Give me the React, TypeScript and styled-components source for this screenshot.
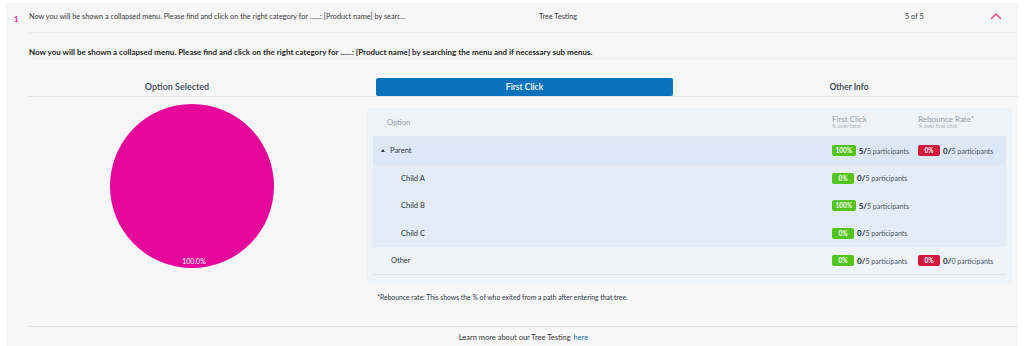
import styled, { createGlobalStyle } from 'styled-components'

const GlobalStyle = createGlobalStyle`
  body {
    margin: 0;
    background: #ffffff;
    font-family: Lato, 'Open Sans', sans-serif;
    color: #333a44;
  }
`;

interface TreeRow {
  label: string;
  level: 'parent' | 'child' | 'other';
  firstPct: string;
  firstCount: number;
  firstTotal: number;
  rebounce?: { pct: string; count: number; total: number };
}

const rows: TreeRow[] = [
  { label: 'Parent', level: 'parent', firstPct: '100%', firstCount: 5, firstTotal: 5, rebounce: { pct: '0%', count: 0, total: 5 } },
  { label: 'Child A', level: 'child', firstPct: '0%', firstCount: 0, firstTotal: 5 },
  { label: 'Child B', level: 'child', firstPct: '100%', firstCount: 5, firstTotal: 5 },
  { label: 'Child C', level: 'child', firstPct: '0%', firstCount: 0, firstTotal: 5 },
  { label: 'Other', level: 'other', firstPct: '0%', firstCount: 0, firstTotal: 5, rebounce: { pct: '0%', count: 0, total: 0 } },
];

const Card = styled.div`
  display: flex;
  margin: 3px 6px 0 6px;
  background: #f7f7f7;
  height: 343px;
`;

const Index = styled.div`
  width: 15px;
  padding: 12px 0 0 8px;
  font-size: 7.5px;
  font-weight: 700;
  color: #e6218a;
`;

const Content = styled.div`
  flex: 1;
  display: flex;
  flex-direction: column;
`;

const Header = styled.div`
  display: grid;
  grid-template-columns: 510px 366px 1fr 28px;
  align-items: center;
  height: 26px;
  padding-bottom: 3px;
  border-bottom: 1px solid #ececec;
  font-size: 7.3px;
  color: #3a3a3a;
`;

const Chevron = styled.svg`
  width: 12px;
  height: 8px;
`;

const Question = styled.div`
  padding: 14px 0 1px;
  font-size: 8px;
  font-weight: 700;
  color: #1f1f1f;
  border-bottom: 1px solid #f1f1f1;
`;

const TabRow = styled.div`
  display: grid;
  grid-template-columns: 338px 1fr;
  margin-top: 19px;
  border-bottom: 1px solid #e4e4e4;
`;

const SideTitle = styled.div`
  text-align: center;
  font-size: 9px;
  font-weight: 600;
  color: #3d4a5c;
  line-height: 18px;
  padding-right: 42px;
`;

const Tabs = styled.div`
  display: grid;
  grid-template-columns: 297px 1fr;
  gap: 15px;
  padding: 0 8px 0 9px;
`;

const Tab = styled.div<{ $active?: boolean }>`
  height: 18px;
  line-height: 18px;
  text-align: center;
  border-radius: 2px;
  font-size: 8.5px;
  font-weight: 600;
  color: ${p => (p.$active ? '#ffffff' : '#2f3a48')};
  background: ${p => (p.$active ? '#0a72ba' : 'transparent')};
`;

const Body = styled.div`
  display: grid;
  grid-template-columns: 338px 1fr;
`;

const PieSide = styled.div`
  padding: 6px 0 0 80px;
`;

const Panel = styled.div`
  margin: 11px 6px 0 0;
  padding: 0 6px 8px;
  background: #eef3f8;
`;

const Row = styled.div<{ $bg?: string; $line?: boolean; $h: number }>`
  display: grid;
  grid-template-columns: 1fr 86px 88px;
  align-items: center;
  height: ${p => p.$h}px;
  background: ${p => p.$bg || 'transparent'};
  border-bottom: ${p => (p.$line ? '1px solid #dde4ec' : 'none')};
`;

const HeadLabel = styled.div`
  padding-left: 14px;
  font-size: 7.5px;
  color: #8f98a3;
`;

const HeadCol = styled.div`
  font-size: 8px;
  color: #959ea8;
  line-height: 8px;
  small {
    display: block;
    font-size: 5.5px;
    line-height: 7px;
    color: #aab2bb;
  }
`;

const Label = styled.div<{ $indent: number }>`
  display: flex;
  align-items: center;
  gap: 5px;
  padding-left: ${p => p.$indent}px;
  font-size: 7.5px;
  color: #2c3440;
`;

const Caret = styled.span`
  width: 0;
  height: 0;
  border-left: 2.5px solid transparent;
  border-right: 2.5px solid transparent;
  border-bottom: 3px solid #2c3440;
`;

const Stat = styled.div`
  display: flex;
  align-items: center;
  gap: 3px;
  font-size: 7px;
  color: #4a5563;
  b {
    font-size: 8px;
    font-weight: 700;
    color: #252b33;
  }
`;

const Badge = styled.span<{ $kind: 'good' | 'bad' }>`
  display: inline-block;
  height: 11px;
  line-height: 11px;
  padding: 0 3.5px;
  min-width: 15px;
  text-align: center;
  border-radius: 2px;
  font-size: 6.5px;
  font-weight: 700;
  color: #ffffff;
  background: ${p => (p.$kind === 'good' ? '#52c41a' : '#d4173f')};
`;

const Note = styled.div`
  padding: 10px 0 0 10px;
  font-size: 6.8px;
  color: #2f3a4a;
`;

const Footer = styled.div`
  margin-top: auto;
  border-top: 1px solid #e2e2e2;
  height: 19px;
  line-height: 21px;
  text-align: center;
  font-size: 7.5px;
  color: #3a3a3a;
  a {
    color: #1a73c7;
    text-decoration: none;
    margin-left: 3px;
  }
`;

function Pie() {
  return (
    <svg width="166" height="166" viewBox="0 0 166 166">
      <circle cx="83" cy="83" r="82" fill="#e6089a" />
      <text x="85" y="164" fill="#ffffff" fontSize="7" fontFamily="Lato, sans-serif" textAnchor="middle" dy="-3">100.0%</text>
    </svg>
  );
}

function StatCell({ pct, count, total, kind }: { pct: string; count: number; total: number; kind: 'good' | 'bad' }) {
  return (
    <Stat>
      <Badge $kind={kind}>{pct}</Badge>
      <span><b>{count}/</b>{total} participants</span>
    </Stat>
  );
}

export default function App() {
  const bgFor = (level: TreeRow['level']) =>
    level === 'parent' ? '#dce8f6' : level === 'child' ? '#e3ecf7' : 'transparent';
  const indentFor = (level: TreeRow['level']) =>
    level === 'parent' ? 8 : level === 'child' ? 28 : 18;

  return (
    <>
      <GlobalStyle />
      <Card>
        <Index>1</Index>
        <Content>
          <Header>
            <span>Now you will be shown a collapsed menu. Please find and click on the right category for ......: [Product name] by searc...</span>
            <span>Tree Testing</span>
            <span>5 of 5</span>
            <Chevron viewBox="0 0 12 8">
              <path d="M1 7 L6 2 L11 7" fill="none" stroke="#e0457b" strokeWidth="1.4" />
            </Chevron>
          </Header>
          <Question>
            Now you will be shown a collapsed menu. Please find and click on the right category for ......: [Product name] by searching the menu and if necessary sub menus.
          </Question>
          <TabRow>
            <SideTitle>Option Selected</SideTitle>
            <Tabs>
              <Tab $active>First Click</Tab>
              <Tab>Other Info</Tab>
            </Tabs>
          </TabRow>
          <Body>
            <PieSide>
              <Pie />
            </PieSide>
            <div>
              <Panel>
                <Row $h={28} $line>
                  <HeadLabel>Option</HeadLabel>
                  <HeadCol>First Click<small>% over total</small></HeadCol>
                  <HeadCol>Rebounce Rate*<small>% over first click</small></HeadCol>
                </Row>
                {rows.map(r => (
                  <Row key={r.label} $h={r.level === 'other' ? 27 : 27.5} $bg={bgFor(r.level)} $line={r.level === 'other'}>
                    <Label $indent={indentFor(r.level)}>
                      {r.level === 'parent' && <Caret />}
                      {r.label}
                    </Label>
                    <StatCell pct={r.firstPct} count={r.firstCount} total={r.firstTotal} kind="good" />
                    {r.rebounce ? (
                      <StatCell pct={r.rebounce.pct} count={r.rebounce.count} total={r.rebounce.total} kind="bad" />
                    ) : (
                      <span />
                    )}
                  </Row>
                ))}
              </Panel>
              <Note>*Rebounce rate: This shows the % of who exited from a path after entering that tree.</Note>
            </div>
          </Body>
          <Footer>
            Learn more about our Tree Testing<a href="#">here</a>
          </Footer>
        </Content>
      </Card>
    </>
  );
}
